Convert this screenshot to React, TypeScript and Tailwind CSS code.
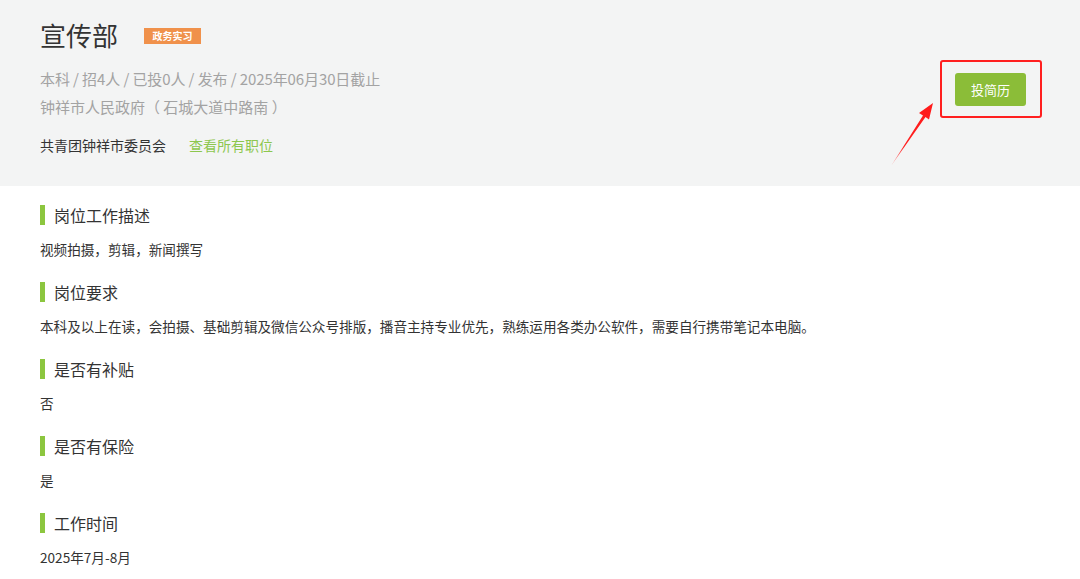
import React from "react";

const sections = [
  { title: "岗位工作描述", text: "视频拍摄，剪辑，新闻撰写" },
  {
    title: "岗位要求",
    text: "本科及以上在读，会拍摄、基础剪辑及微信公众号排版，播音主持专业优先，熟练运用各类办公软件，需要自行携带笔记本电脑。",
  },
  { title: "是否有补贴", text: "否" },
  { title: "是否有保险", text: "是" },
  { title: "工作时间", text: "2025年7月-8月" },
];

const Arrow = () => (
  <svg
    className="absolute left-0 top-0 pointer-events-none"
    width="1080"
    height="186"
    viewBox="0 0 1080 186"
  >
    <defs>
      <linearGradient id="arrowFade" x1="891" y1="166" x2="933" y2="103" gradientUnits="userSpaceOnUse">
        <stop offset="0" stopColor="#ff2a2a" stopOpacity="0.3" />
        <stop offset="0.3" stopColor="#ff2020" />
        <stop offset="1" stopColor="#ff1a1a" />
      </linearGradient>
    </defs>
    <polygon
      points="933,103 919,113 923,115.5 891,166 925.5,117 929,119.6"
      fill="url(#arrowFade)"
    />
  </svg>
);

const App = () => {
  return (
    <div
      className="w-[1080px] h-[579px] overflow-hidden bg-white text-[#333]"
      style={{ fontFamily: '"Noto Sans CJK SC", "Noto Sans", sans-serif' }}
    >
      <div className="relative h-[186px] bg-[#f3f4f4] pl-10 pr-[54px] flex justify-between items-start">
        <div className="pt-[17px]">
          <div className="flex items-center">
            <h1 className="text-[26px] leading-[36px] text-[#333]">宣传部</h1>
            <span className="ml-[26px] mt-[1px] w-[57px] h-[16px] bg-[#f0914b] text-white text-[10px] leading-[16px] font-bold text-center">
              政务实习
            </span>
          </div>
          <div className="mt-3 text-[15px] leading-[28px] text-[#a3a3a3]">
            <p className="tracking-[-0.1px]">本科 / 招4人 / 已投0人 / 发布 / 2025年06月30日截止</p>
            <p>钟祥市人民政府（ 石城大道中路南 ）</p>
          </div>
          <div className="mt-[14px] flex items-center gap-[23px] text-[14px] leading-5">
            <span className="text-[#333]">共青团钟祥市委员会</span>
            <a className="text-[#8dc74e]">查看所有职位</a>
          </div>
        </div>
        <div className="relative mt-[73px]">
          <button className="w-[71px] h-[33px] rounded-[3px] bg-[#8bbd38] text-white text-[13px]">
            投简历
          </button>
          <div className="absolute -left-[15px] -right-[16px] -top-[13px] -bottom-[12px] border-2 border-[#ff1f1f] rounded-[3px]" />
        </div>
        <Arrow />
      </div>

      <div className="pl-10 pt-[17px] flex flex-col gap-[21px]">
        {sections.map((s) => (
          <div key={s.title} className="flex flex-col gap-3">
            <div className="flex items-center gap-[9px]">
              <span className="w-[5px] h-[20px] bg-[#8cc63f]" />
              <h3 className="text-[16px] leading-6 text-[#333]">{s.title}</h3>
            </div>
            <p className="text-[13.6px] leading-5 text-[#333]">{s.text}</p>
          </div>
        ))}
      </div>
    </div>
  );
};

export default App;
